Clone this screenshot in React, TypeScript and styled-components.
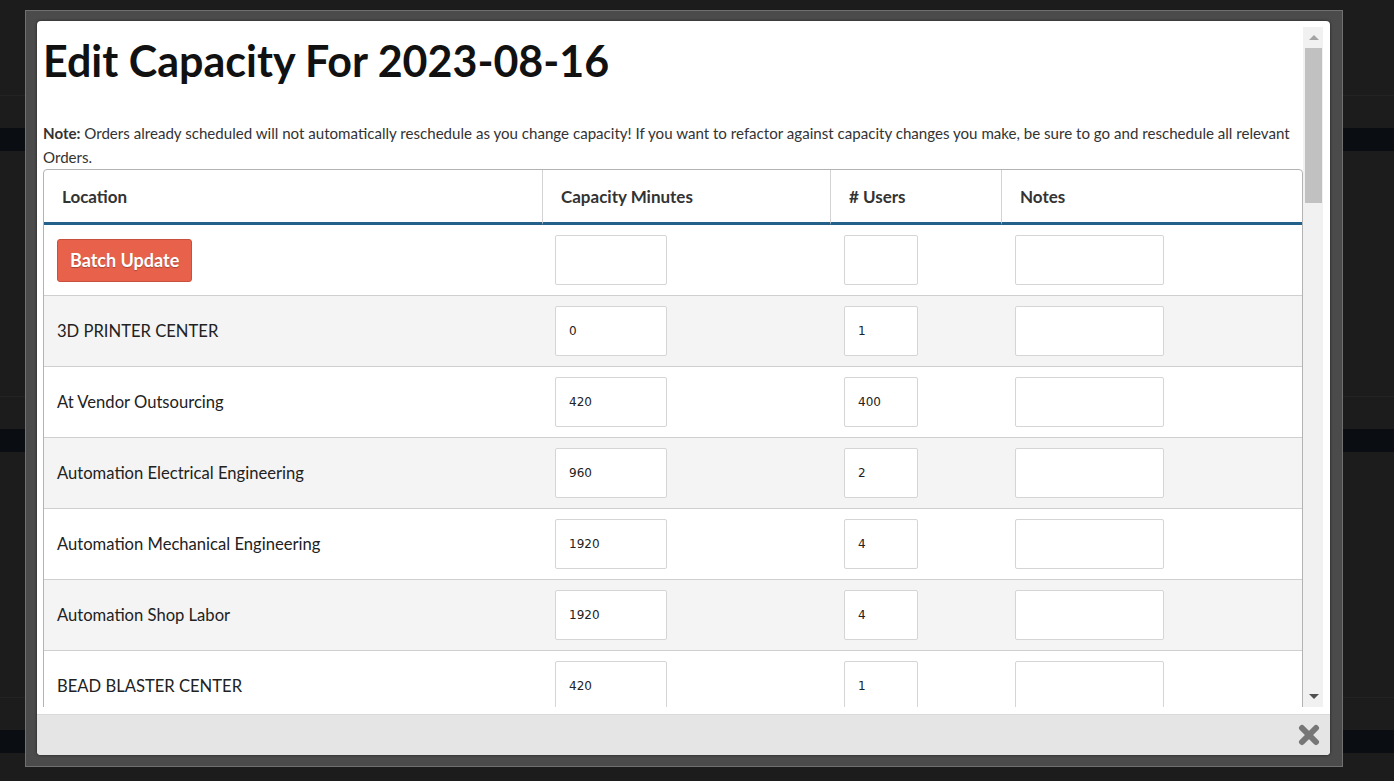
import React, {FC} from 'react';
import styled, {createGlobalStyle} from 'styled-components';

const GlobalStyle = createGlobalStyle`
  html, body {
    margin: 0;
    padding: 0;
    height: 100%;
    overflow: hidden;
    background: #1c1c1c;
  }
  body {
    font-family: Lato, "Noto Sans", sans-serif;
  }
`

// page behind the modal
const Backdrop = styled.div`
  display: flex;
  flex-direction: column;
`
const BackdropBlock = styled.div`
  height: 301px;
  box-sizing: border-box;
  padding-top: 95px;
  display: flex;
  flex-direction: column;
`
const HairLine = styled.div`
  height: 1px;
  background: #232323;
`
const Band = styled.div`
  margin-top: 32px;
  height: 23px;
  background: #0a0e12;
`

const Overlay = styled.div`
  position: fixed;
  inset: 0;
  padding: 10px 51px 14px 25px;
  display: flex;
`
const Frame = styled.div`
  flex: 1;
  display: flex;
  background: #4b4b4b;
  border: 1px solid #707070;
  padding: 10px 12px 11px 11px;
`
const Panel = styled.div`
  flex: 1;
  display: flex;
  flex-direction: column;
  background: #fff;
  border-radius: 4px;
  overflow: hidden;
  box-shadow: 0 0 3px rgba(0, 0, 0, 0.6);
`
const Body = styled.div`
  flex: 1;
  min-height: 0;
  display: flex;
  padding: 6px 7px 7px 6px;
`
const Content = styled.div`
  flex: 1;
  min-width: 0;
  overflow: hidden;
`

const ScrollTrack = styled.div`
  width: 20px;
  background: #f1f1f1;
  display: flex;
  flex-direction: column;
`
const ScrollButton = styled.div`
  height: 21px;
  display: flex;
  align-items: center;
  justify-content: center;
  padding-left: 1px;
`
const Arrow = styled.div<{ $down?: boolean }>`
  width: 0;
  height: 0;
  border-left: 5px solid transparent;
  border-right: 5px solid transparent;
  ${p => p.$down
    ? 'border-top: 5px solid #505050;'
    : 'border-bottom: 5px solid #a3a3a3;'}
`
const Thumb = styled.div`
  height: 155px;
  margin: 0 1px 0 2px;
  background: #c1c1c1;
`
const TrackFill = styled.div`
  flex: 1;
`

const Heading = styled.h1`
  margin: 6px 0 32px;
  font-size: 43px;
  line-height: 56px;
  font-weight: 700;
  color: #111;
`
const Note = styled.p`
  margin: 0;
  font-size: 15.1px;
  line-height: 24px;
  color: #333;
`

const Table = styled.table`
  width: 100%;
  table-layout: fixed;
  border-collapse: separate;
  border-spacing: 0;
  border: 1px solid #b3b3b3;
  border-radius: 4px 4px 0 0;

  tbody > tr + tr > td {
    border-top: 1px solid #cfcfcf;
  }
  tbody td + td + td {
    padding-left: 14px;
  }
`
const Th = styled.th`
  height: 52px;
  padding: 0 18px;
  text-align: left;
  font-size: 17px;
  font-weight: 700;
  color: #333;
  border-bottom: 3px solid #23618b;
  & + & {
    border-left: 1px solid #d3d3d3;
  }
`
const Row = styled.tr<{ $striped?: boolean }>`
  background: ${p => p.$striped ? '#f4f4f4' : '#fff'};
`
const Td = styled.td`
  padding: 10px 13px;
  vertical-align: middle;
  font-size: 16.6px;
  color: #222;
`
const Field = styled.input<{ $w: number }>`
  box-sizing: border-box;
  display: block;
  width: ${p => p.$w}px;
  height: 50px;
  padding: 0 13px;
  border: 1px solid #d5d5d5;
  border-radius: 2px;
  background: #fff;
  font-family: "DejaVu Sans", Verdana, sans-serif;
  font-size: 12px;
  color: #222;
  outline: none;
`
const BatchButton = styled.button`
  height: 43px;
  padding: 0 12px;
  background: #e8614b;
  border: 1px solid #c8503c;
  border-radius: 3px;
  color: #fff;
  font-family: Lato, "Noto Sans", sans-serif;
  font-size: 18px;
  font-weight: 700;
  text-shadow: 0 1px 1px rgba(0, 0, 0, 0.3);
  cursor: pointer;
`

const Footer = styled.div`
  height: 41px;
  box-sizing: border-box;
  background: #e5e5e5;
  border-top: 1px solid #d9d9d9;
  display: flex;
  align-items: center;
  justify-content: flex-end;
  padding-right: 10px;
`
const CloseButton = styled.button`
  border: 0;
  padding: 0;
  background: none;
  display: flex;
  cursor: pointer;
`

interface Location {
  name: string
  minutes: string
  users: string
}

const locations: Location[] = [
  {name: '3D PRINTER CENTER', minutes: '0', users: '1'},
  {name: 'At Vendor Outsourcing', minutes: '420', users: '400'},
  {name: 'Automation Electrical Engineering', minutes: '960', users: '2'},
  {name: 'Automation Mechanical Engineering', minutes: '1920', users: '4'},
  {name: 'Automation Shop Labor', minutes: '1920', users: '4'},
  {name: 'BEAD BLASTER CENTER', minutes: '420', users: '1'},
]

const CloseIcon = () =>
  <svg width="22" height="22" viewBox="0 0 22 22">
    <g stroke="#777" strokeWidth="6" strokeLinecap="round">
      <line x1="4" y1="4" x2="18" y2="18"/>
      <line x1="18" y1="4" x2="4" y2="18"/>
    </g>
  </svg>

const App: FC = () =>
  <>
    <GlobalStyle/>
    <Backdrop>
      {[0, 1, 2].map(i =>
        <BackdropBlock key={i}>
          <HairLine/>
          <Band/>
        </BackdropBlock>)}
    </Backdrop>
    <Overlay>
      <Frame>
        <Panel>
          <Body>
            <Content>
              <Heading>Edit Capacity For 2023-08-16</Heading>
              <Note>
                <b>Note:</b> Orders already scheduled will not automatically reschedule as you change capacity! If you
                want to refactor against capacity changes you make, be sure to go and reschedule all relevant Orders.
              </Note>
              <Table>
                <colgroup>
                  <col style={{width: 498}}/>
                  <col style={{width: 288}}/>
                  <col style={{width: 171}}/>
                  <col/>
                </colgroup>
                <thead>
                <tr>
                  <Th>Location</Th>
                  <Th>Capacity Minutes</Th>
                  <Th># Users</Th>
                  <Th>Notes</Th>
                </tr>
                </thead>
                <tbody>
                <Row>
                  <Td><BatchButton>Batch Update</BatchButton></Td>
                  <Td><Field $w={112}/></Td>
                  <Td><Field $w={74}/></Td>
                  <Td><Field $w={149}/></Td>
                </Row>
                {locations.map((loc, i) =>
                  <Row key={loc.name} $striped={i % 2 === 0}>
                    <Td>{loc.name}</Td>
                    <Td><Field $w={112} defaultValue={loc.minutes}/></Td>
                    <Td><Field $w={74} defaultValue={loc.users}/></Td>
                    <Td><Field $w={149}/></Td>
                  </Row>)}
                </tbody>
              </Table>
            </Content>
            <ScrollTrack>
              <ScrollButton><Arrow/></ScrollButton>
              <Thumb/>
              <TrackFill/>
              <ScrollButton><Arrow $down/></ScrollButton>
            </ScrollTrack>
          </Body>
          <Footer>
            <CloseButton aria-label="Close"><CloseIcon/></CloseButton>
          </Footer>
        </Panel>
      </Frame>
    </Overlay>
  </>

export default App
